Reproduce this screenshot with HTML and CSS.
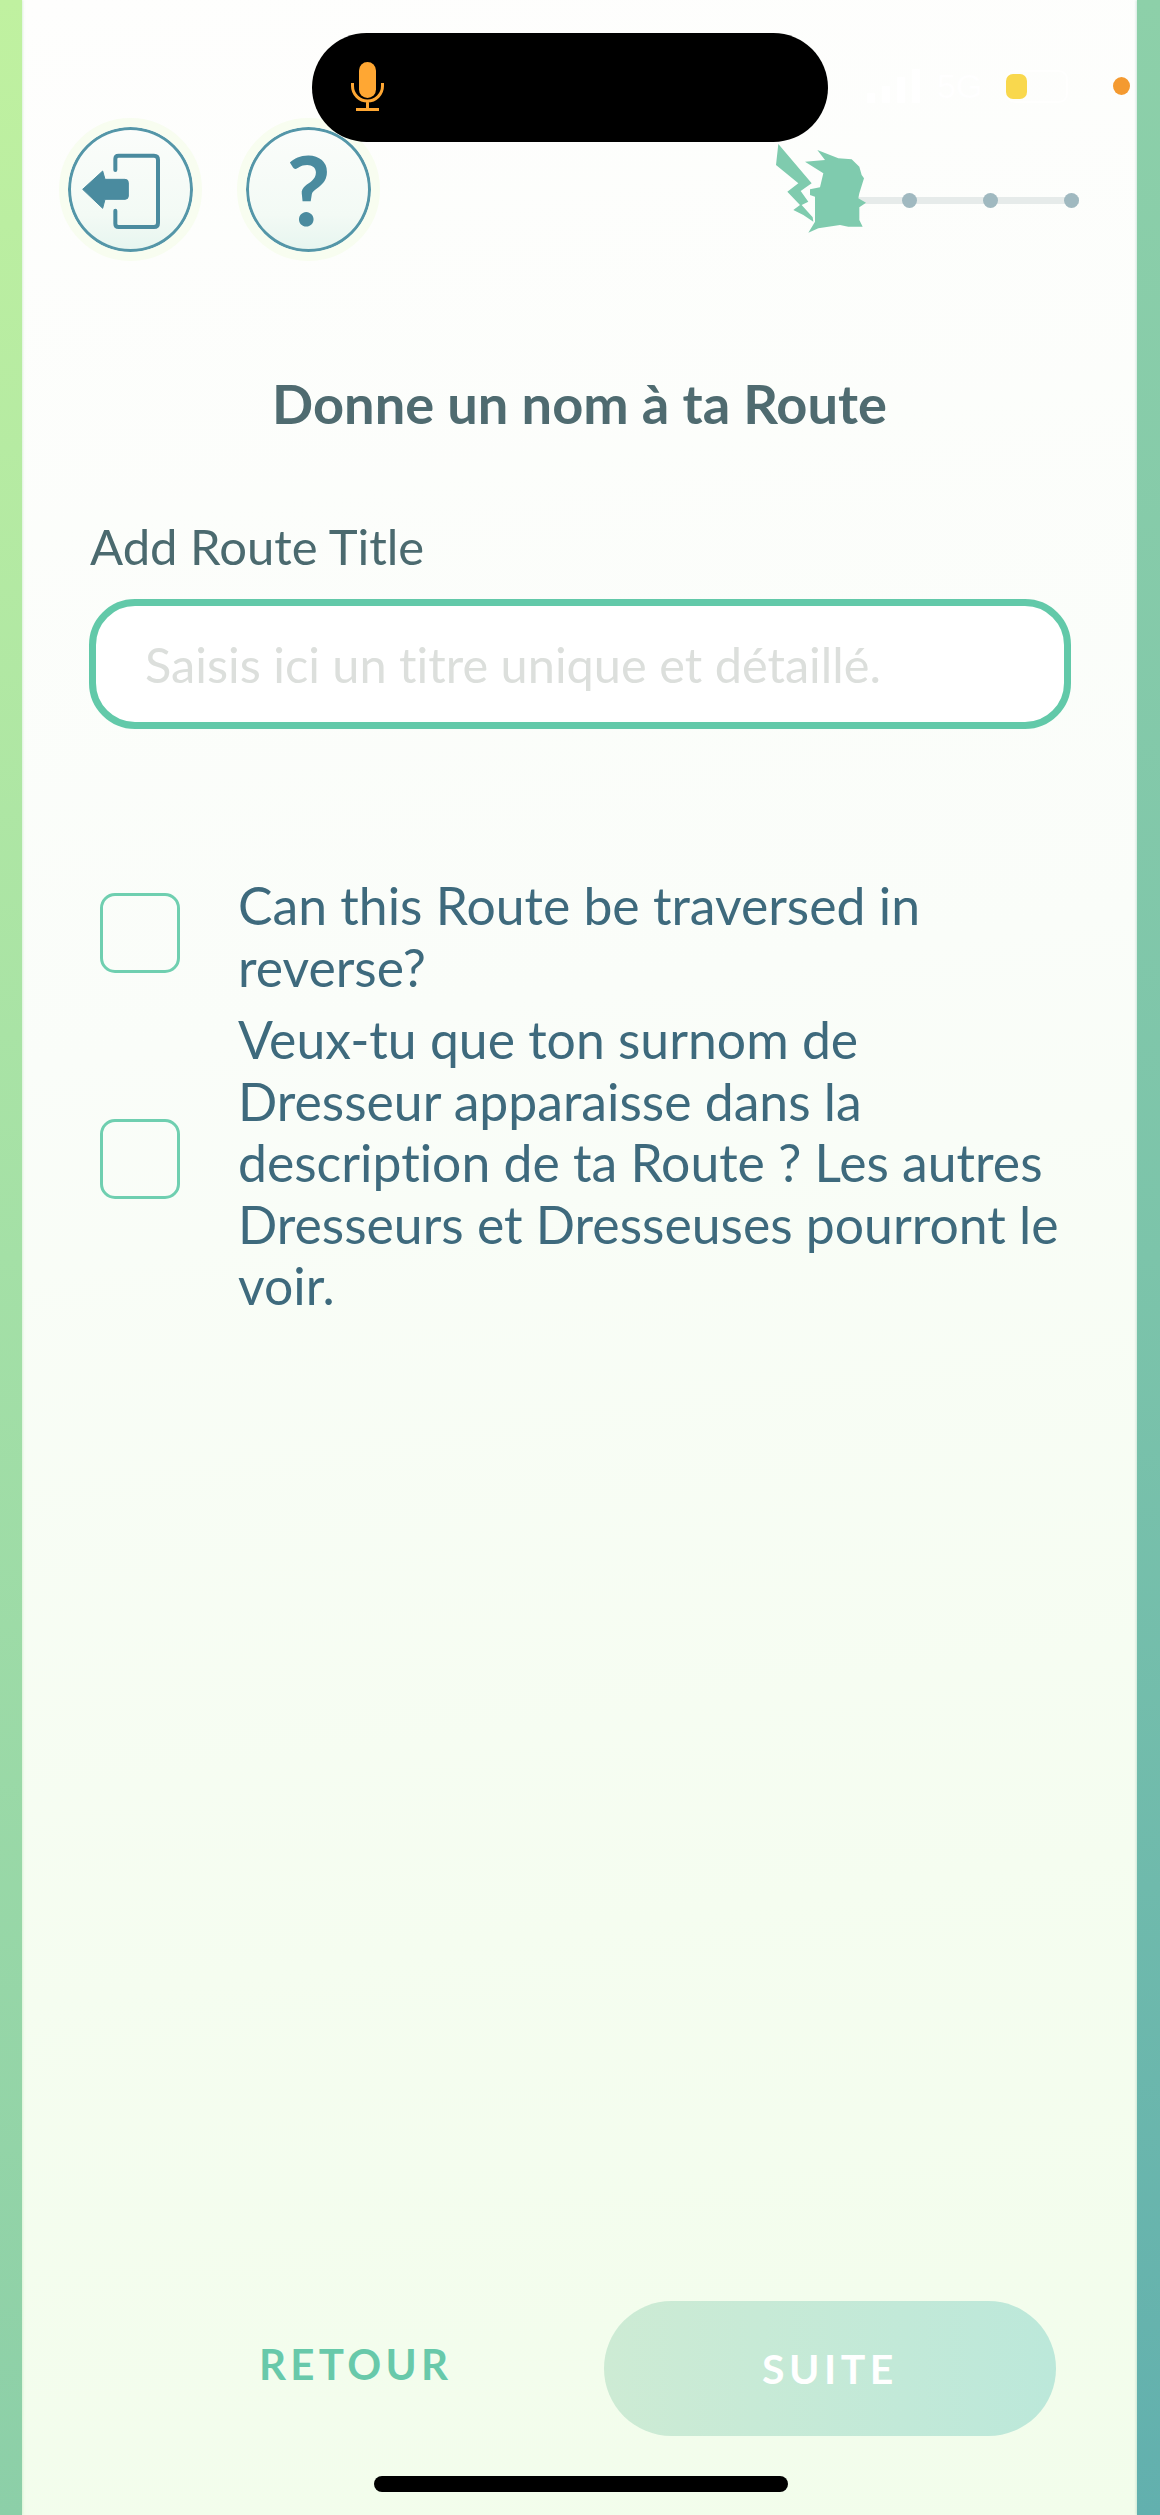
FILE: index.html
```
<!DOCTYPE html>
<html lang="fr">
<head>
<meta charset="utf-8">
<title>Donne un nom à ta Route</title>
<link rel="stylesheet" href="styles.css">
</head>
<body>
<div class="phone">
  <div class="strip strip-left"></div>
  <main class="screen">
    <div class="topbar">
      <button class="round" aria-label="Quitter">
        <svg class="round-icon" viewBox="0 0 480 480">
          <path class="door" d="M193 180V147Q193 137 203 137H309Q321 137 321 149V339Q321 351 309 351H203Q193 351 193 341V302"/>
          <path class="arrow" d="M95 238L155 183L162 208H222Q232 208 232 218V258Q232 268 222 268H162L155 295Z"/>
        </svg>
      </button>
      <button class="round" aria-label="Aide"><span class="help">?</span></button>
      <div class="progress">
        <svg class="pika" viewBox="0 0 360 330">
          <path d="M55 42L155 160L122 183L145 215L125 225L158 262L160 275L130 255L100 240L120 225L82 185L115 160L48 105Z"/>
          <path d="M172 60L235 85L275 88L298 110L305 135L312 145L298 190L295 205L318 218L298 232L298 270L308 290L265 290L240 285L175 295L145 308L165 275L165 200L150 195L150 178L180 172L190 130L135 95L195 90Z"/>
        </svg>
        <div class="track"><i class="dot"></i><i class="dot"></i><i class="dot"></i></div>
      </div>
    </div>

    <h1 class="title">Donne un nom à ta Route</h1>

    <label class="field-label" for="route-title">Add Route Title</label>
    <input class="field" id="route-title" type="text" placeholder="Saisis ici un titre unique et détaillé.">

    <div class="options">
      <div class="option">
        <span class="box"></span>
        <p class="option-text">Can this Route be traversed in reverse?</p>
      </div>
      <div class="option">
        <span class="box"></span>
        <p class="option-text">Veux-tu que ton surnom de Dresseur apparaisse dans la description de ta Route ? Les autres Dresseurs et Dresseuses pourront le voir.</p>
      </div>
    </div>

    <div class="actions">
      <span class="back">RETOUR</span>
      <span class="next">SUITE</span>
    </div>
    <div class="homebar"></div>
  </main>
  <div class="strip strip-right"></div>

  <div class="notch">
    <svg class="mic" viewBox="0 0 33 49">
      <rect x="8" y="0" width="17" height="36" rx="8.5" class="mic-fill"/>
      <path class="mic-line" d="M1.500 21V24A15 15 0 0 0 31.500 24V21M16.500 39V47M5 47.500H28"/>
    </svg>
  </div>
  <div class="status">
    <span class="bars"><i class="bar b1"></i><i class="bar b2"></i><i class="bar b3"></i><i class="bar b4"></i></span>
    <span class="net">5G</span>
    <span class="battery"><i class="level"></i></span>
  </div>
  <span class="rec"></span>
</div>
</body>
</html>
```
FILE: styles.css
```
* { box-sizing: border-box; }
html, body { margin: 0; padding: 0; }
body { font-family: Lato, "Liberation Sans", sans-serif; font-variant-ligatures: none; }

.phone {
  position: relative;
  display: flex;
  width: 1160px;
  height: 2515px;
  overflow: hidden;
  background: linear-gradient(172deg, #fefefd 0%, #fafdf9 40%, #f5fdf0 75%, #f2fdeb 100%);
}
.strip { flex: none; }
.strip-left { width: 22px; background: linear-gradient(180deg, #c0f1a0 0%, #a4e0a6 50%, #8ccfa8 100%); box-shadow: 1px 0 2px rgba(190,230,190,.5); }
.strip-right { width: 23px; background: linear-gradient(180deg, #8dd0a9 0%, #7cc4aa 50%, #62b0ae 100%); box-shadow: -1px 0 2px rgba(150,200,180,.4); }

.screen { flex: 1; display: flex; flex-direction: column; min-width: 0; }

.topbar { display: flex; align-items: flex-start; gap: 35px; height: 142px; margin-top: 118px; padding-left: 37px; }
.round {
  flex: none;
  width: 143px; height: 143px;
  padding: 0;
  display: flex; align-items: center; justify-content: center;
  border: 9px solid #f8fdf0;
  border-radius: 50%;
  background: linear-gradient(180deg, #fbfdfb 0%, #f3faf5 70%, #e6f5ef 100%);
  box-shadow: inset 0 0 0 3px #5496a8;
  font-family: Lato, sans-serif;
}
.round-icon { width: 160px; height: 160px; flex: none; margin: -17px; }
.door { fill: none; stroke: #4a8b9f; stroke-width: 12; stroke-linecap: round; stroke-linejoin: round; }
.arrow { fill: #4a8b9f; stroke: #4a8b9f; stroke-width: 3; stroke-linejoin: round; }
.help { color: #4a8b9f; font-weight: 700; font-size: 96px; line-height: 1; margin-top: -2px; }

.progress { position: relative; margin-left: auto; width: 301px; height: 89px; margin-top: 26px; margin-right: 58px; }
.pika { position: absolute; left: -18px; top: -14px; width: 120px; height: 110px; fill: #7fcbae; z-index: 1; }
.track { position: absolute; left: 68px; right: 0; top: 53px; height: 7px; background: #e6ebea; display: flex; justify-content: flex-end; gap: 66px; align-items: center; }
.dot { flex: none; width: 15px; height: 15px; border-radius: 50%; background: #a0b9c0; }

.title { margin: 113px 0 0; text-align: center; color: #4f6b70; font-size: 54.200px; font-weight: 700; line-height: 62px; }

.field-label { display: block; margin: 83px 0 0 68px; color: #4b6a6f; font-size: 49px; line-height: 56px; }
.field {
  display: block;
  width: 982px; height: 130px;
  margin: 25px 0 0 67px;
  padding: 0 49px;
  border: 7px solid #62c9a9;
  border-radius: 46px;
  background: #fff;
  color: #4b6a6f;
  font: 400 48.700px Lato, sans-serif;
  font-variant-ligatures: none;
  outline: none;
}
.field::placeholder { color: #dcdfdc; opacity: 1; }

.options { display: flex; flex-direction: column; gap: 11px; margin: 146px 0 0 78px; width: 1000px; }
.option { display: flex; align-items: center; gap: 58px; }
.box { flex: none; width: 80px; height: 80px; margin-top: -8px; border: 3.500px solid #6fcfb0; border-radius: 15px; }
.option-text { margin: 0; width: 830px; color: #3e6a7d; font-size: 51.700px; line-height: 61.500px; }

.actions { display: flex; align-items: center; justify-content: space-between; margin-top: auto; padding: 0 81px 0 237px; }
.back { color: #68c9aa; font-size: 42px; font-weight: 700; letter-spacing: 4.300px; line-height: 50px; margin-top: -10px; }
.next {
  width: 452px; height: 135px;
  display: flex; align-items: center; justify-content: center;
  border-radius: 68px;
  background: linear-gradient(90deg, #cdebd4 0%, #bce8da 100%);
  color: #fff; font-size: 41px; font-weight: 700; letter-spacing: 4.500px;
}
.homebar { align-self: flex-start; width: 414px; height: 16px; margin: 40px 0 23px 352px; border-radius: 8px; background: #000; }

.notch { position: absolute; left: 312px; top: 33px; width: 516px; height: 109px; border-radius: 54.500px; background: #000; z-index: 2; }
.mic { position: absolute; left: 39px; top: 29px; width: 33px; height: 49px; }
.mic-fill { fill: #ffa733; }
.mic-line { fill: none; stroke: #ffa733; stroke-width: 3; }

.status { position: absolute; left: 867px; top: 69px; display: flex; align-items: center; height: 34px; }
.bars { display: flex; align-items: flex-end; gap: 7px; height: 34px; }
.bar { width: 8px; background: #fff; border-radius: 1px; }
.b1 { height: 10px; } .b2 { height: 17px; } .b3 { height: 26px; } .b4 { height: 34px; }
.net { margin-left: 17px; width: 50px; color: #fff; font: 400 34px "Liberation Sans", sans-serif; line-height: 34px; }
.battery { margin-left: 19px; width: 62px; height: 33px; border: 2px solid rgba(255,255,255,.7); border-radius: 9px; position: relative; }
.level { position: absolute; left: -2px; top: 2px; width: 21px; height: 25px; border-radius: 7px; background: #f9d84d; }
.rec { position: absolute; left: 1113px; top: 77px; width: 17px; height: 18px; border-radius: 50%; background: #f49a30; }
```
